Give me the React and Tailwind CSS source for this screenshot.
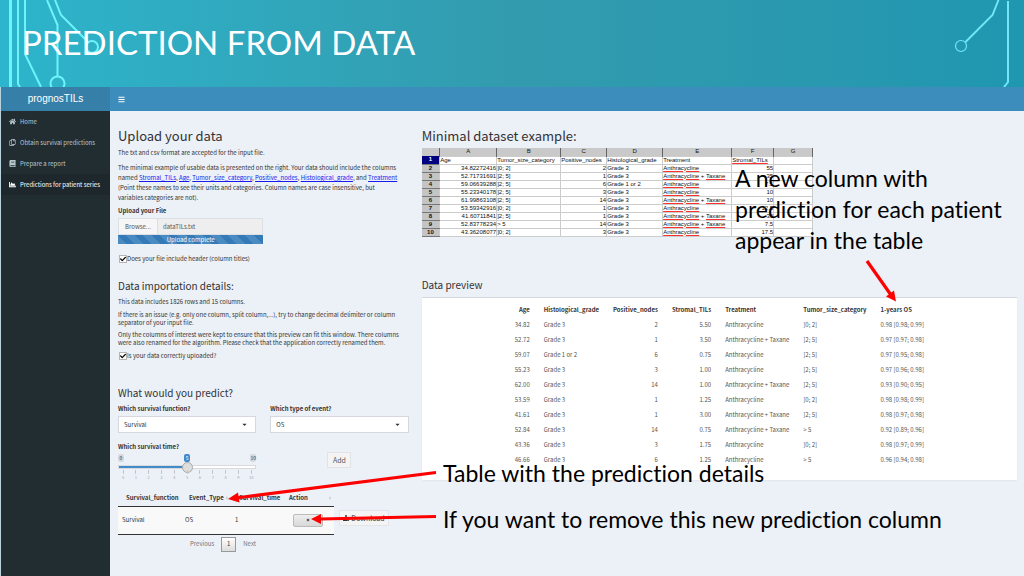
import { useState } from 'react'
import { FaBars, FaBook, FaCaretDown, FaChartArea, FaCheck, FaDownload, FaHome, FaRegCopy, FaSort, FaTimes } from 'react-icons/fa'

const menu = [
  { label: 'Home', icon: FaHome },
  { label: 'Obtain survival predictions', icon: FaRegCopy },
  { label: 'Prepare a report', icon: FaBook },
  { label: 'Predictions for patient series', icon: FaChartArea, active: true },
]

const sheetColumns = ['A', 'B', 'C', 'D', 'E', 'F', 'G']

const sheetRows = [
  ['34.82272416', ']0; 2]', '2', 'Grade 3', 'Anthracycline', '55'],
  ['52.71731691', ']2; 5]', '1', 'Grade 3', 'Anthracycline + Taxane', '35'],
  ['59.06639288', ']2; 5]', '6', 'Grade 1 or 2', 'Anthracycline', '7.5'],
  ['55.23340178', ']2; 5]', '3', 'Grade 3', 'Anthracycline', '10'],
  ['61.99863108', ']2; 5]', '14', 'Grade 3', 'Anthracycline + Taxane', '10'],
  ['53.59342916', ']0; 2]', '1', 'Grade 3', 'Anthracycline', '12.5'],
  ['41.60711841', ']2; 5]', '1', 'Grade 3', 'Anthracycline + Taxane', '30'],
  ['52.83778234', '> 5', '14', 'Grade 3', 'Anthracycline + Taxane', '7.5'],
  ['43.36208077', ']0; 2]', '3', 'Grade 3', 'Anthracycline', '17.5'],
]

const previewRows = [
  ['34.82', 'Grade 3', '2', '5.50', 'Anthracycline', ']0; 2]', '0.98 [0.98; 0.99]'],
  ['52.72', 'Grade 3', '1', '3.50', 'Anthracycline + Taxane', ']2; 5]', '0.97 [0.97; 0.98]'],
  ['59.07', 'Grade 1 or 2', '6', '0.75', 'Anthracycline', ']2; 5]', '0.97 [0.95; 0.98]'],
  ['55.23', 'Grade 3', '3', '1.00', 'Anthracycline', ']2; 5]', '0.97 [0.96; 0.98]'],
  ['62.00', 'Grade 3', '14', '1.00', 'Anthracycline + Taxane', ']2; 5]', '0.93 [0.90; 0.95]'],
  ['53.59', 'Grade 3', '1', '1.25', 'Anthracycline', ']0; 2]', '0.98 [0.98; 0.99]'],
  ['41.61', 'Grade 3', '1', '3.00', 'Anthracycline + Taxane', ']2; 5]', '0.98 [0.97; 0.98]'],
  ['52.84', 'Grade 3', '14', '0.75', 'Anthracycline + Taxane', '> 5', '0.92 [0.89; 0.96]'],
  ['43.36', 'Grade 3', '3', '1.75', 'Anthracycline', ']0; 2]', '0.98 [0.97; 0.99]'],
  ['46.66', 'Grade 3', '6', '1.25', 'Anthracycline', '> 5', '0.96 [0.94; 0.98]'],
]

function Banner() {
  return (
    <header className="relative flex h-[87px] items-center overflow-hidden bg-linear-to-r from-[#2cb5cc] via-[#339bae] to-[#1f97b0] px-[22px] pb-1">
      <svg className="absolute top-0 left-0 h-[87px] w-[110px]" viewBox="0 0 110 87" fill="none" stroke="#6ff3fb" strokeWidth="2">
        <path d="M10.5 0V87" strokeWidth="3" />
        <path d="M18 0V84L20 87" />
        <path d="M25 0V54L41 87" />
        <path d="M47 0L57.500 25V76" />
        <circle cx="57.500" cy="83.500" r="7" />
        <path d="M55 0L61 15L88 42" />
        <circle cx="92" cy="47" r="6" />
      </svg>
      <svg className="absolute top-0 right-0 h-[87px] w-[84px]" viewBox="940 0 84 87" fill="none" stroke="#72e6f7" strokeWidth="2">
        <path d="M998.500 0L992.500 15L965.500 42" />
        <circle cx="961" cy="46" r="5.500" strokeWidth="1.200" />
        <path d="M1008 1V82L1004 87" />
      </svg>
      <h1 className="relative font-[Lato,sans-serif] text-[33px] leading-[40px] whitespace-nowrap text-white">PREDICTION FROM DATA</h1>
    </header>
  )
}

function Sidebar() {
  return (
    <nav className="w-[110px] shrink-0 border-l border-[#b9d3df] bg-[#222d32]">
      <ul>
        {menu.map(({ label, icon: Icon, active }) => (
          <li key={label}>
            <a
              href="#"
              className={`flex h-[21px] items-center gap-1 pl-2 whitespace-nowrap ${active ? 'bg-[#1e282c] text-white' : 'text-[#b8c7ce]'}`}
            >
              <Icon className="size-[7px]" />
              {label}
            </a>
          </li>
        ))}
      </ul>
    </nav>
  )
}

function CheckRow({ id, children }) {
  return (
    <div className="flex items-center">
      <span className="grid size-[9px] place-items-center">
        <input
          id={id}
          type="checkbox"
          defaultChecked
          className="peer col-start-1 row-start-1 size-[8px] appearance-none border border-[#b5b5b5] bg-white"
        />
        <FaCheck className="pointer-events-none invisible col-start-1 row-start-1 size-[6px] text-black peer-checked:visible" />
      </span>
      <label htmlFor={id}>{children}</label>
    </div>
  )
}

function SelectField({ id, label, options }) {
  return (
    <div>
      <label htmlFor={id} className="block leading-[10px] font-bold">{label}</label>
      <div className="mt-0.5 grid items-center">
        <select id={id} className="col-start-1 row-start-1 h-[17px] w-full appearance-none border border-[#d5d9df] bg-white px-[5px]">
          {options.map(o => <option key={o}>{o}</option>)}
        </select>
        <FaCaretDown className="pointer-events-none col-start-1 row-start-1 mr-2 size-[7px] justify-self-end" />
      </div>
    </div>
  )
}

function TimeSlider() {
  const [time, setTime] = useState(5)

  return (
    <div>
      <label htmlFor="time" className="block leading-[10px] font-bold">Which survival time?</label>
      <div className="mt-0.5 flex justify-between text-[5px] leading-[8px]">
        <span className="w-[6px] rounded-xs bg-[#d5d8dd] text-center">0</span>
        <span className="w-[6px] rounded-xs bg-[#428bca] text-center text-white">{time}</span>
        <span className="w-[6px] rounded-xs bg-[#d5d8dd] text-center">10</span>
      </div>
      <input
        id="time"
        type="range"
        min="0"
        max="10"
        value={time}
        onChange={e => setTime(e.target.value)}
        style={{ backgroundSize: `${time * 10}% 100%` }}
        className="mt-[3px] block h-1 w-full appearance-none border border-[#d8dade] bg-white bg-linear-to-r from-[#428bca] to-[#428bca] bg-no-repeat [&::-webkit-slider-thumb]:size-[11px] [&::-webkit-slider-thumb]:appearance-none [&::-webkit-slider-thumb]:rounded-full [&::-webkit-slider-thumb]:border [&::-webkit-slider-thumb]:border-[#aaa] [&::-webkit-slider-thumb]:bg-[#dedede]"
      />
      <div className="mt-px flex justify-between px-[3px] text-[4px] leading-[6px] text-[#a5a9ae]">
        {Array.from({ length: 11 }, (_, i) => (
          <span key={i} className="flex w-1 flex-col items-center">
            <span className="h-1 w-px bg-[#c3c7cc]" />
            {i}
          </span>
        ))}
      </div>
    </div>
  )
}

function PredictionTable() {
  return (
    <div className="mt-[9px] flex items-center gap-[5px]">
      <div className="w-[216px] shrink-0">
        <table className="w-full table-fixed border-b border-[#333]">
          <thead>
            <tr className="h-[17px] border-b border-[#333]">
              {['Survival_function', 'Event_Type', 'Survival_time', 'Action'].map((h, i) => (
                <th key={h} className={i === 0 ? 'w-[63px]' : i === 3 ? 'w-[53px]' : ''}>
                  <span className="flex items-center justify-between pt-0.5 pr-0.5 pl-2">
                    {h}
                    <FaSort className="size-1 text-[#c5c8cd]" />
                  </span>
                </th>
              ))}
            </tr>
          </thead>
          <tbody>
            <tr className="h-[28px] bg-[#f9f9f9]">
              <td className="pl-1">Survival</td>
              <td className="pl-1">OS</td>
              <td className="pl-1">1</td>
              <td className="pl-3">
                <button aria-label="Remove" className="flex h-[13px] w-[30px] items-center justify-center rounded-xs border border-[#bbb] bg-linear-to-b from-[#eee] to-[#d8d8d8]">
                  <FaTimes className="size-1" />
                </button>
              </td>
            </tr>
          </tbody>
        </table>
        <div className="mt-0.5 flex items-center justify-center gap-[7px] pr-[6px] text-[#777]">
          <button>Previous</button>
          <button className="h-[15px] w-[15px] border border-[#999] bg-linear-to-b from-white to-[#dcdcdc] text-[#333]">1</button>
          <button>Next</button>
        </div>
      </div>
      <button className="mb-[26px] flex h-4 w-[50px] items-center justify-center gap-0.5 border border-[#e3e5ea] bg-[#f4f4f4] text-[7px] self-end">
        <FaDownload className="size-[6px]" />
        Download
      </button>
    </div>
  )
}

function Sheet() {
  return (
    <table className="w-[391px] table-fixed border-collapse bg-white font-['Liberation_Sans',Arial,sans-serif] text-[6px] leading-[7px] whitespace-nowrap text-[#111]">
      <colgroup>
        <col className="w-[18px]" />
        <col className="w-[57px]" />
        <col className="w-[64px]" />
        <col className="w-[46px]" />
        <col className="w-[56px]" />
        <col className="w-[69px]" />
        <col className="w-[42px]" />
        <col className="w-[39px]" />
      </colgroup>
      <thead>
        <tr className="h-2 bg-[#c9c9c9]">
          <th className="border-r border-[#666]" />
          {sheetColumns.map(c => <th key={c} className="border-r border-[#666] font-normal">{c}</th>)}
        </tr>
      </thead>
      <tbody>
        <tr className="h-2">
          <th className="bg-[#000080] text-white">1</th>
          {['Age', 'Tumor_size_category', 'Positive_nodes', 'Histological_grade', 'Treatment', 'Stromal_TILs', ''].map((c, i) => (
            <td key={i} className={`border border-[#ccc] ${i === 5 ? 'underline decoration-[#ff3030]' : ''}`}>{c}</td>
          ))}
        </tr>
        {sheetRows.map((row, r) => (
          <tr key={r} className="h-2">
            <th className="border-y border-[#777] bg-[#c4c4c4]">{r + 2}</th>
            {row.map((c, i) => (
              <td key={i} className={`border border-[#ccc] ${i === 0 || i === 2 || i === 5 ? 'text-right' : ''}`}>
                {i === 4 ? (
                  <>
                    <span className="underline decoration-[#ff3030]">Anthracycline</span>
                    {c.endsWith('Taxane') && <> + <span className="underline decoration-[#ff3030]">Taxane</span></>}
                  </>
                ) : c}
              </td>
            ))}
            <td className="border border-[#ccc]" />
          </tr>
        ))}
      </tbody>
    </table>
  )
}

function Preview() {
  const isNumber = i => i === 0 || i === 2 || i === 3

  return (
    <div className="mt-[3px] flex h-[183px] justify-center border-t border-[#d5d9df] bg-white pt-[5px] shadow-xs">
      <table className="h-max whitespace-nowrap">
        <thead>
          <tr className="h-[15px]">
            {['Age', 'Histological_grade', 'Positive_nodes', 'Stromal_TILs', 'Treatment', 'Tumor_size_category', '1-years OS'].map((h, i) => (
              <th key={h} className={`px-[7px] ${isNumber(i) ? 'text-right' : 'text-left'}`}>{h}</th>
            ))}
          </tr>
        </thead>
        <tbody className="text-[#555]">
          {previewRows.map(row => (
            <tr key={row[0]} className="h-[15px]">
              {row.map((c, i) => <td key={i} className={`px-[7px] ${isNumber(i) ? 'text-right' : ''}`}>{c}</td>)}
            </tr>
          ))}
        </tbody>
      </table>
    </div>
  )
}

// Slide callouts drawn over the app
function Callouts() {
  return (
    <div className="pointer-events-none absolute inset-0 font-[Lato,sans-serif] text-[23px] leading-[31px] whitespace-nowrap text-black [font-variant-ligatures:none]">
      <svg className="absolute top-0 left-0 h-[576px] w-[1024px]" viewBox="0 0 1024 576" fill="#fe0000" stroke="#fe0000">
        <path d="M867 261L891 295M436 472.500L236 498M436 516.500L320 519" strokeWidth="3.200" />
        <path d="M896 301.500L886 296.500L894 290.500ZM228 499L238 492.500L239.500 502.500ZM311 519L321 514L321 524Z" stroke="none" />
      </svg>
      <p className="absolute top-[163px] left-[735px]">
        A new column with<br />
        prediction for each patient<br />
        appear in the table
      </p>
      <p className="absolute top-[458px] left-[443px]">Table with the prediction details</p>
      <p className="absolute top-[504px] left-[443px]">If you want to remove this new prediction column</p>
    </div>
  )
}

export default function App() {
  return (
    <div className="relative flex min-h-screen flex-col overflow-hidden bg-[#ecf0f7] font-['Noto_Sans_CJK_SC',sans-serif] text-[6px] leading-[10px] text-[#333]">
      <Banner />
      <div className="flex h-6 items-center bg-[#3c8dbc] text-white">
        <div className="flex h-full w-[110px] items-center justify-center border-l border-[#b9d3df] bg-[#367fa9] font-['Liberation_Sans',Arial,sans-serif] text-[10px]">prognosTILs</div>
        <button aria-label="Toggle menu" className="px-2"><FaBars className="size-[7px]" /></button>
      </div>
      <div className="flex grow">
        <Sidebar />
        <main className="grid grow grid-cols-3 pt-4">
          <section className="pr-[6px] pl-2">
            <h2 className="text-[13px] leading-[18px]">Upload your data</h2>
            <p className="mt-[3px]">The txt and csv format are accepted for the input file.</p>
            <p className="mt-[5px]">
              The minimal example of usable data is presented on the right. Your data should include the columns named{' '}
              <a href="#" className="text-[#1a1aee] underline">Stromal_TILs</a>, <a href="#" className="text-[#1a1aee] underline">Age</a>,{' '}
              <a href="#" className="text-[#1a1aee] underline">Tumor_size_category</a>, <a href="#" className="text-[#1a1aee] underline">Positive_nodes</a>,{' '}
              <a href="#" className="text-[#1a1aee] underline">Histological_grade</a>, and <a href="#" className="text-[#1a1aee] underline">Treatment</a>
              <br />
              (Point these names to see their units and categories. Column names are case insensitive, but
              <br />
              variables categories are not).
            </p>
            <label htmlFor="file" className="mt-[3px] block font-bold">Upload your File</label>
            <div className="mt-0.5 w-1/2">
              <div className="flex h-[17px] border border-[#dcdfe4]">
                <button className="w-[38px] bg-[#f6f6f6] text-[#555]">Browse...</button>
                <input id="file" readOnly value="dataTILs.txt" className="min-w-0 grow border-l border-[#dcdfe4] bg-[#eee] pl-[5px] text-[#555]" />
              </div>
              <div className="h-[9px] bg-[#337ab7] bg-[repeating-linear-gradient(45deg,#4a8cc2_0_6px,#337ab7_6px_12px)] text-center leading-[9px] text-white">Upload complete</div>
            </div>
            <div className="mt-[10px]"><CheckRow id="header">Does your file include header (column titles)</CheckRow></div>

            <h3 className="mt-[13px] text-[10px] leading-[18px]">Data importation details:</h3>
            <div className="mt-[3px] leading-[8px]">
              <p>This data includes 1826 rows and 15 columns.</p>
              <p className="mt-[5px]">If there is an issue (e.g. only one column, split column,...), try to change decimal delimiter or column separator of your input file.</p>
              <p className="mt-1">Only the columns of interest were kept to ensure that this preview can fit this window. There columns were also renamed for the algorithm. Please check that the application correctly renamed them.</p>
            </div>
            <div className="mt-1"><CheckRow id="uploaded">Is your data correctly uploaded?</CheckRow></div>

            <h3 className="mt-[23px] text-[10px] leading-[18px]">What would you predict?</h3>
            <div className="mt-0.5 grid grid-cols-2 gap-x-[14px] gap-y-[9px]">
              <SelectField id="fn" label="Which survival function?" options={['Survival']} />
              <SelectField id="event" label="Which type of event?" options={['OS']} />
              <TimeSlider />
              <button className="mt-[10px] h-4 w-6 justify-self-center border border-[#e0e3e8] bg-[#f4f4f4] text-[7px] text-[#555]">Add</button>
            </div>
            <PredictionTable />
          </section>

          <section className="col-span-2 px-[7px]">
            <h2 className="mb-[3px] text-[13px] leading-[18px]">Minimal dataset example:</h2>
            <Sheet />
            <h3 className="mt-[39px] text-[10px] leading-[18px]">Data preview</h3>
            <Preview />
          </section>
        </main>
      </div>
      <Callouts />
    </div>
  )
}
